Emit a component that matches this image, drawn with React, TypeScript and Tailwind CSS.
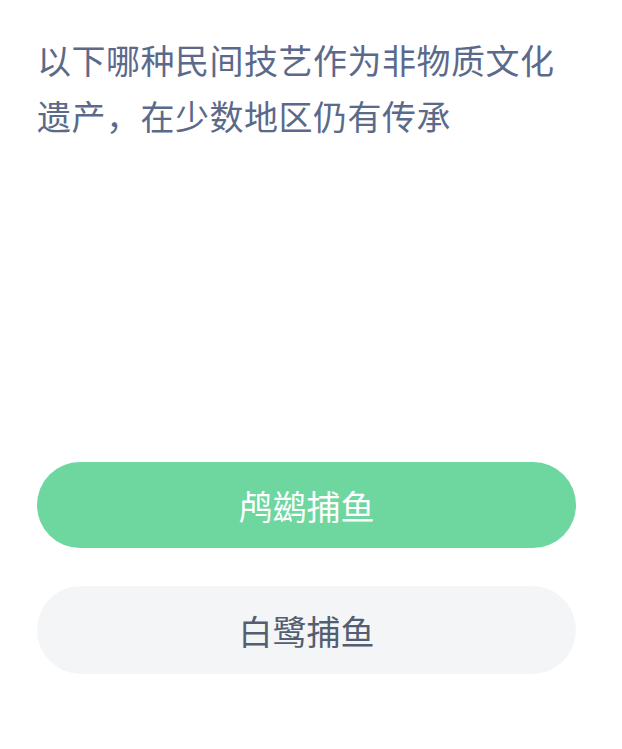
export default function App() {
  return (
    <div
      className="min-h-[749px] w-full bg-white px-[37px] pt-[32px]"
      style={{ fontFamily: '"Noto Sans CJK SC", "Noto Sans", sans-serif' }}
    >
      {/* Question */}
      <p className="text-[34px] leading-[56px] text-[#5b6a8b] tracking-[0.5px]">
        以下哪种民间技艺作为非物质文化遗产，在少数地区仍有传承
      </p>

      {/* Options */}
      <div className="mt-[318px] flex w-[539px] flex-col gap-[38px]">
        <button className="flex h-[86px] w-full items-center justify-center rounded-full bg-[#6dd79f] text-[34px] text-white">
          鸬鹚捕鱼
        </button>
        <button className="flex h-[88px] w-full items-center justify-center rounded-full bg-[#f4f5f7] text-[34px] text-[#535e72]">
          白鹭捕鱼
        </button>
      </div>
    </div>
  );
}
